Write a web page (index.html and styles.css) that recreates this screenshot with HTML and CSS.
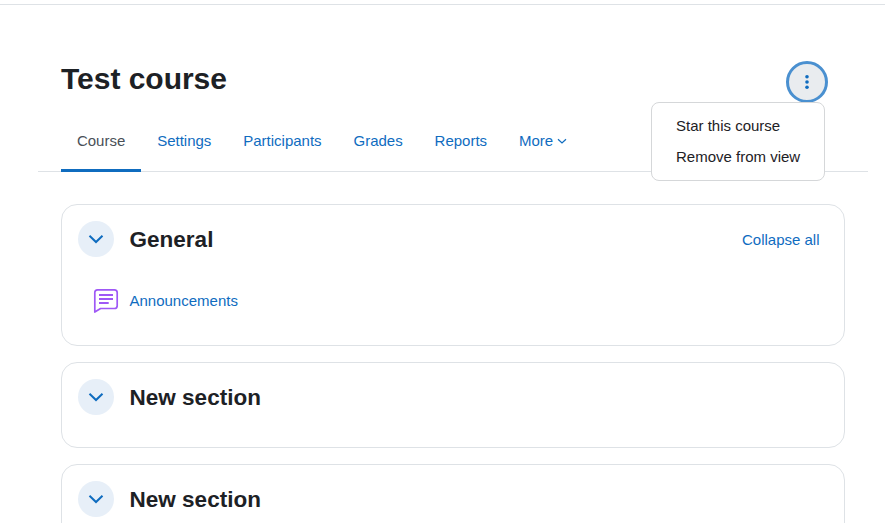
FILE: index.html
```html
<!DOCTYPE html>
<html lang="en">
<head>
<meta charset="utf-8">
<title>Test course</title>
<link rel="stylesheet" href="styles.css">
</head>
<body>
<div class="page">
  <header class="course-header">
    <h1 class="course-title">Test course</h1>
    <div class="actions">
      <button class="kebab" aria-label="Actions">
        <svg width="16" height="16" viewBox="0 0 16 16"><circle cx="8" cy="2.8" r="1.8"/><circle cx="8" cy="8" r="1.8"/><circle cx="8" cy="13.2" r="1.8"/></svg>
      </button>
      <div class="menu">
        <a class="menu-item">Star this course</a>
        <a class="menu-item">Remove from view</a>
      </div>
    </div>
  </header>
  <nav class="tabs">
    <a class="tab active">Course</a>
    <a class="tab">Settings</a>
    <a class="tab">Participants</a>
    <a class="tab">Grades</a>
    <a class="tab">Reports</a>
    <a class="tab">More
      <svg class="caret" width="10" height="10" viewBox="0 0 10 10"><path d="M1 3.2 5 7l4-3.8"/></svg>
    </a>
  </nav>
  <main class="sections">
    <section class="card card-general">
      <div class="card-head">
        <span class="toggle"><svg width="18" height="18" viewBox="0 0 18 18"><path d="M2.5 5.8 9 12l6.5-6.2"/></svg></span>
        <h2 class="card-title">General</h2>
        <a class="collapse">Collapse all</a>
      </div>
      <div class="activity">
        <svg class="forum" width="28" height="28" viewBox="0 0 28 28"><path d="M5.6 3.8h16.8a2.8 2.8 0 0 1 2.8 2.8v13.1a2.8 2.8 0 0 1-2.8 2.8H8.6L2.8 26V6.6a2.8 2.8 0 0 1 2.8-2.8Z"/><path class="forum-lines" d="M7 9h14M7 13h14M7 17h9.7"/></svg>
        <a class="activity-link">Announcements</a>
      </div>
    </section>
    <section class="card card-empty">
      <div class="card-head">
        <span class="toggle"><svg width="18" height="18" viewBox="0 0 18 18"><path d="M2.5 5.8 9 12l6.5-6.2"/></svg></span>
        <h2 class="card-title">New section</h2>
      </div>
    </section>
    <section class="card card-empty">
      <div class="card-head">
        <span class="toggle"><svg width="18" height="18" viewBox="0 0 18 18"><path d="M2.5 5.8 9 12l6.5-6.2"/></svg></span>
        <h2 class="card-title">New section</h2>
      </div>
    </section>
  </main>
</div>
</body>
</html>
```
FILE: styles.css
```css
html, body {
  margin: 0;
  height: 100%;
  overflow: hidden;
  background: #fff;
}
body {
  font-family: "Liberation Sans", Arial, sans-serif;
  font-size: 15px;
  color: #1d2125;
}
.page {
  margin-top: 4px;
  border-top: 1px solid #dee2e6;
  padding: 0 17px 0 38px;
}
.course-header {
  display: flex;
  justify-content: space-between;
  align-items: flex-start;
  padding: 56px 40px 0 23px;
  height: 48px;
}
.course-title {
  margin: 0;
  font-size: 30px;
  line-height: 36px;
  font-weight: 700;
  letter-spacing: -0.02px;
}
.actions {
  position: relative;
}
.kebab {
  display: flex;
  align-items: center;
  justify-content: center;
  width: 42px;
  height: 42px;
  padding: 0;
  border: 3px solid #4a90d0;
  border-radius: 50%;
  background: #e9ecef;
}
.kebab svg { fill: #0f6cbf; }
.menu {
  position: absolute;
  top: 41px;
  right: 3px;
  width: 172px;
  padding: 7px 0 8px;
  background: #fff;
  border: 1px solid #d5d7d9;
  border-radius: 8px;
  z-index: 2;
}
.menu-item {
  display: block;
  padding: 6px 24px;
  line-height: 19px;
  white-space: nowrap;
  color: #1d2125;
}
.tabs {
  display: flex;
  height: 62px;
  padding-left: 23px;
  border-bottom: 1px solid #dee2e6;
}
.tab {
  display: flex;
  align-items: center;
  gap: 4px;
  padding: 0 15.95px;
  height: 62px;
  box-sizing: border-box;
  color: #0f6cbf;
}
.tab.active {
  color: #495057;
  border-bottom: 3px solid #0f6cbf;
  height: 63px;
  padding-top: 2px;
}
.caret {
  margin-top: 2px;
}
.caret path {
  fill: none;
  stroke: #0f6cbf;
  stroke-width: 1.2;
}
.sections {
  display: flex;
  flex-direction: column;
  gap: 16px;
  margin: 32px 23px 0;
}
.card {
  box-sizing: border-box;
  border: 1px solid #dee2e6;
  border-radius: 16px;
  padding: 16px;
}
.card-general { height: 142px; }
.card-empty { height: 86px; }
.card-head {
  display: flex;
  align-items: center;
  gap: 15.6px;
  height: 36px;
}
.toggle {
  display: flex;
  align-items: center;
  justify-content: center;
  width: 36px;
  height: 36px;
  border-radius: 50%;
  background: #e7eff8;
}
.toggle path {
  fill: none;
  stroke: #0f6cbf;
  stroke-width: 2;
}
.card-title {
  margin: 0;
  height: 36px;
  font-size: 22.5px;
  line-height: 38px;
  font-weight: 700;
}
.collapse {
  margin-left: auto;
  margin-right: 8.5px;
  color: #0f6cbf;
}
.activity {
  display: flex;
  align-items: center;
  gap: 9.5px;
  margin: 29px 0 0 14px;
}
.forum path {
  fill: none;
  stroke: #9f58f6;
  stroke-width: 1.7;
  stroke-linejoin: round;
}
.forum .forum-lines {
  stroke-width: 1.9;
}
.activity-link { color: #0f6cbf; }
```
